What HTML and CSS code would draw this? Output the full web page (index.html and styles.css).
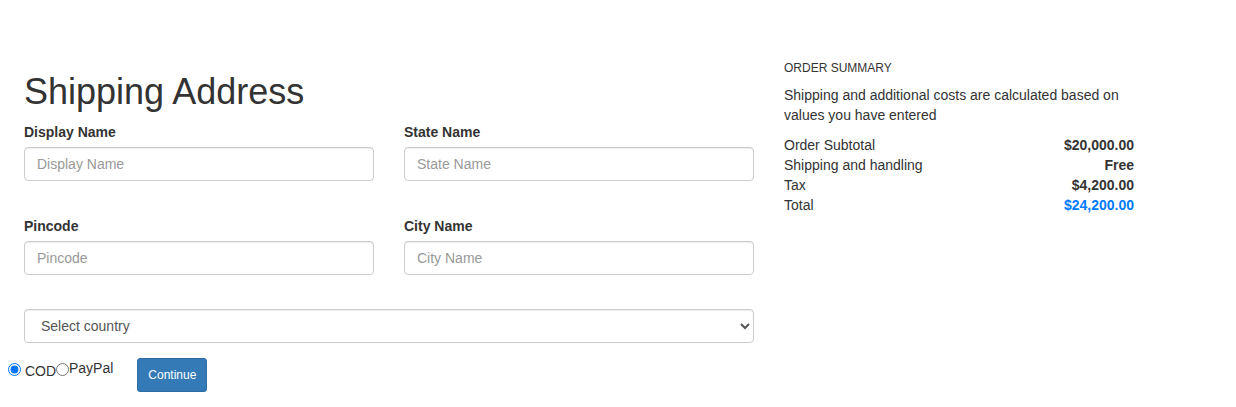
FILE: index.html
```html
<!DOCTYPE html>
<html lang="en">
<head>
<meta charset="utf-8">
<title>Shipping Address</title>
<link rel="stylesheet" href="styles.css">
</head>
<body>
<div class="layout">
  <div class="main">
    <div class="form-area">
      <h1 class="title">Shipping Address</h1>
      <div class="grid">
        <div class="form-group">
          <label class="label">Display Name</label>
          <input class="control" type="text" placeholder="Display Name">
        </div>
        <div class="form-group">
          <label class="label">State Name</label>
          <input class="control" type="text" placeholder="State Name">
        </div>
        <div class="form-group">
          <label class="label">Pincode</label>
          <input class="control" type="text" placeholder="Pincode">
        </div>
        <div class="form-group">
          <label class="label">City Name</label>
          <input class="control" type="text" placeholder="City Name">
        </div>
      </div>
      <select class="control select">
        <option>Select country</option>
      </select>
    </div>
    <div class="pay-row">
      <div class="options"><input class="radio" type="radio" name="pay" checked> COD<input class="radio" type="radio" name="pay"><span class="paypal">PayPal</span></div>
      <button class="btn" type="button">Continue</button>
    </div>
  </div>
  <div class="summary">
    <h5 class="summary-title">ORDER SUMMARY</h5>
    <p class="summary-note">Shipping and additional costs are calculated based on values you have entered</p>
    <div class="row"><span>Order Subtotal</span><strong>$20,000.00</strong></div>
    <div class="row"><span>Shipping and handling</span><strong>Free</strong></div>
    <div class="row"><span>Tax</span><strong>$4,200.00</strong></div>
    <div class="row"><span>Total</span><strong class="total">$24,200.00</strong></div>
  </div>
</div>
</body>
</html>
```
FILE: styles.css
```css
* { box-sizing: border-box; }
body {
  margin: 8px;
  font-family: "Liberation Sans", Arial, Helvetica, sans-serif;
  font-size: 14px;
  line-height: 20px;
  color: #333;
  background: #fff;
}
.layout {
  display: flex;
  padding-top: 44px;
}
.main {
  width: 746px;
}
.form-area {
  padding-left: 16px;
}
.title {
  margin: 20px 0 10px;
  font-size: 36px;
  line-height: 40px;
  font-weight: normal;
  color: #333;
}
.grid {
  display: grid;
  grid-template-columns: 350px 350px;
  column-gap: 30px;
  row-gap: 35px;
  margin-bottom: 34px;
}
.form-group {
  display: flex;
  flex-direction: column;
}
.label {
  font-weight: bold;
  margin-bottom: 5px;
  line-height: 20px;
}
.control {
  display: block;
  width: 100%;
  height: 34px;
  padding: 6px 12px;
  font-family: inherit;
  font-size: 14px;
  line-height: 20px;
  color: #555;
  background: #fff;
  border: 1px solid #ccc;
  border-radius: 4px;
  box-shadow: inset 0 1px 1px rgba(0,0,0,.075);
}
.control::placeholder { color: #999; }
.select {
  width: 730px;
  padding-left: 12px;
}
.pay-row {
  display: flex;
  align-items: flex-start;
  margin-top: 15px;
}
.options {
  line-height: 20px;
}
.radio {
  margin: 4px 0 0;
  width: 13px;
  height: 13px;
  vertical-align: baseline;
}
.paypal {
  vertical-align: 3px;
}
.btn {
  margin-left: 24px;
  height: 34px;
  padding: 0 10px;
  font-family: inherit;
  font-size: 12px;
  color: #fff;
  background: #337ab7;
  border: 1px solid #2e6da4;
  border-radius: 3px;
}
.summary {
  margin-left: 30px;
  width: 350px;
}
.summary-title {
  margin: 8px 0 8px;
  font-size: 12px;
  line-height: 17px;
  font-weight: normal;
}
.summary-note {
  margin: 0 0 10px;
}
.row {
  display: flex;
  justify-content: space-between;
}
.total { color: #007bff; }
```
